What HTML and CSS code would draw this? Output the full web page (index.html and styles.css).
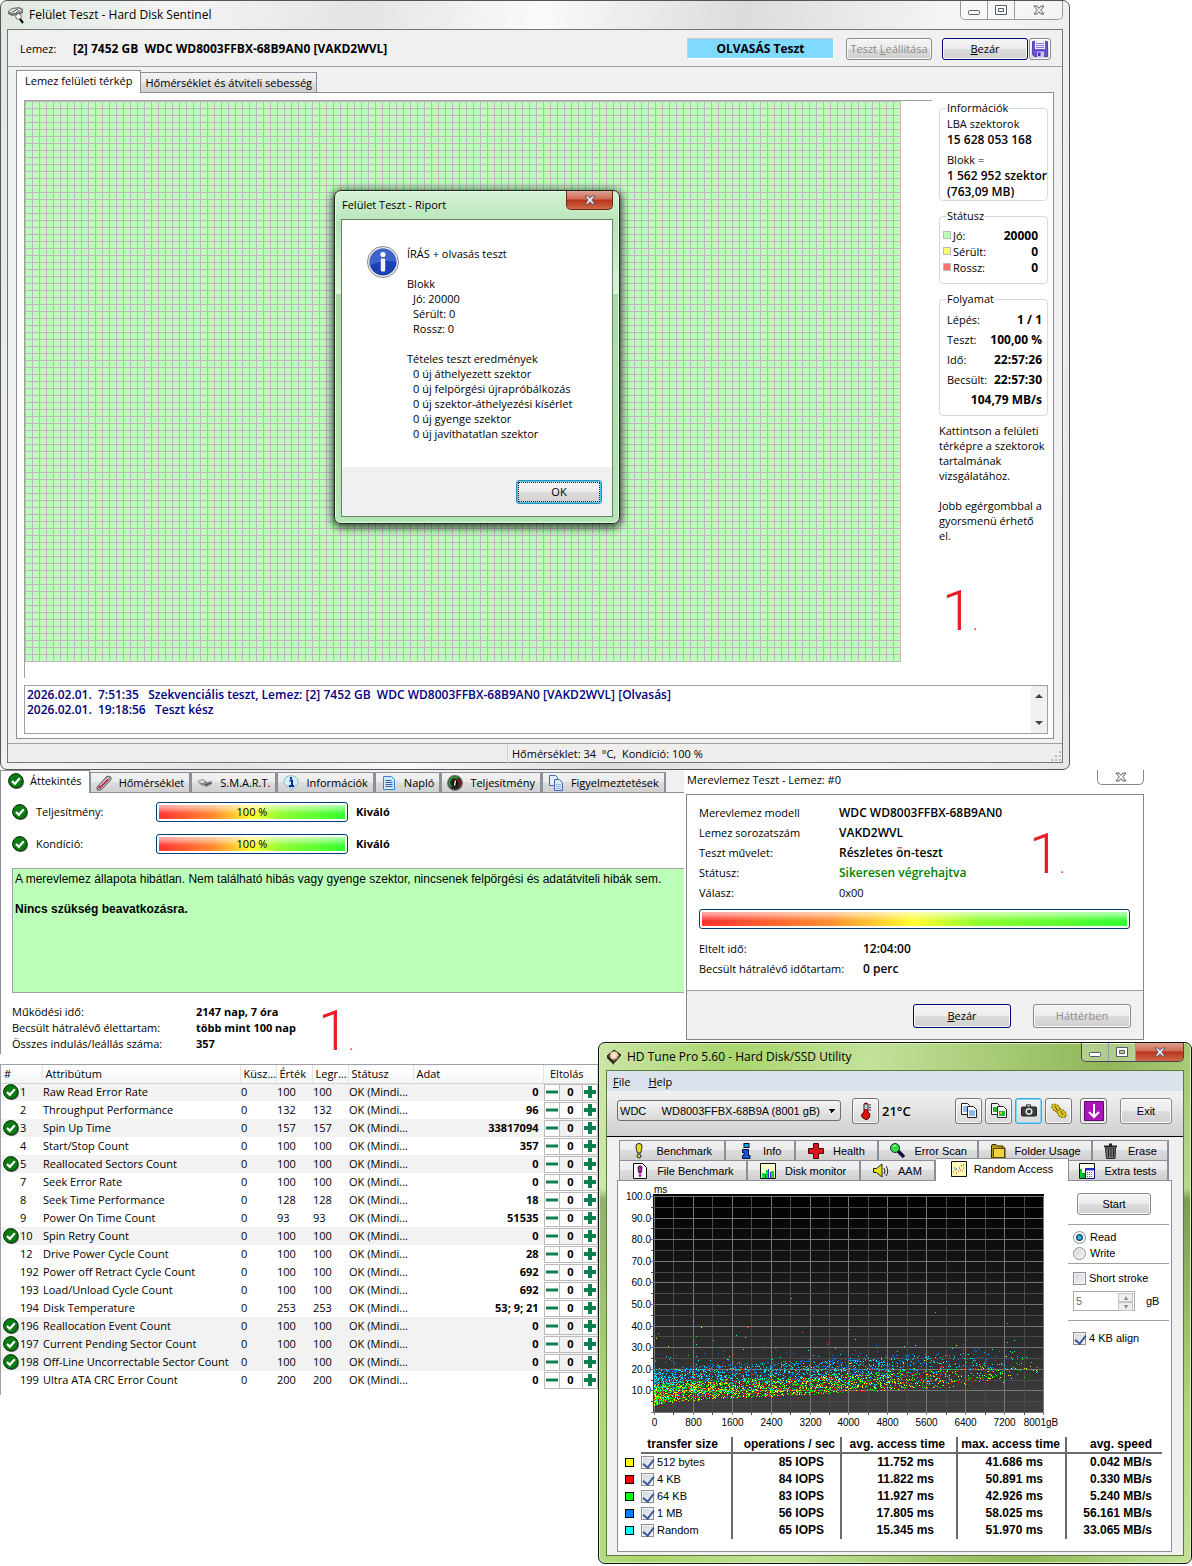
FILE: index.html
```html
<!DOCTYPE html>
<html lang="hu">
<head>
	<title>Felület Teszt - Hard Disk Sentinel</title>
	<meta charset="UTF-8">
	<meta name="viewport" content="width=device-width, initial-scale=1.0">
	<link rel="stylesheet" href="styles.css">
</head>
<body>
	<!-- shared icons -->
	<svg class="defs" width="0" height="0">
		<symbol id="ok" viewBox="0 0 16 16">
			<circle cx="9" cy="9" r="7" fill="#777"/>
			<circle cx="7.8" cy="7.8" r="7.2" fill="#0a7d12" stroke="#002b00"/>
			<path d="M4 8l2.800 2.800L11.800 5.200" fill="none" stroke="#fff" stroke-width="2.200"/>
		</symbol>
		<symbol id="cross" viewBox="0 0 12 10">
			<path d="M1 1h3l2 2.400L8 1h3L7.700 5 11 9H8L6 6.600 4 9H1l3.300-4z" fill="#fff" stroke="#555a6a"/>
		</symbol>
		<symbol id="min" viewBox="0 0 12 10">
			<rect x=".5" y="5.500" width="11" height="4" rx="1" fill="#fff" stroke="#555a6a"/>
		</symbol>
		<symbol id="max" viewBox="0 0 12 10">
			<path d="M.5.5h11v9H.5zM3.500 3.500v3h5v-3z" fill="#fff" fill-rule="evenodd" stroke="#555a6a"/>
		</symbol>
	</svg>

	<main class="desktop">
		<section class="window surface">
			<header class="titlebar">
				<svg width="18" height="18" viewBox="0 0 18 18">
					<path d="M1 5l4-3 7-1 4 2v4l-4 2-7 1-4-2z" fill="#777"/>
					<path d="M2 5l4-2 6-.5 3 2-4 2-6 .5z" fill="#ececec"/>
					<path d="M5 6l6-3M9 7l4-3" stroke="#555"/>
					<circle cx="11.500" cy="10.500" r="2.800" fill="#fff" stroke="#666"/>
					<path d="M13 13l3 4" stroke="#111" stroke-width="2.200"/>
				</svg>
				<h1>Felület Teszt - Hard Disk Sentinel</h1>
				<div class="caption">
					<button aria-label="Minimize"><svg width="12" height="10"><use href="#min"/></svg></button>
					<button aria-label="Maximize"><svg width="12" height="10"><use href="#max"/></svg></button>
					<button class="wide" aria-label="Close"><svg width="12" height="10"><use href="#cross"/></svg></button>
				</div>
			</header>
			<div class="client">
				<div class="diskbar">
					<span class="disk-label">Lemez:</span>
					<b class="disk-name">[2] 7452 GB&nbsp; WDC WD8003FFBX-68B9AN0 [VAKD2WVL]</b>
					<b class="mode">OLVASÁS Teszt</b>
					<button class="btn stop" disabled>Teszt <u>L</u>eállítása</button>
					<button class="btn default close"><u>B</u>ezár</button>
					<button class="btn save" aria-label="Mentés">
						<svg width="16" height="16" viewBox="0 0 16 16">
							<path d="M.5.5h15v15h-13l-2-2z" fill="#6a4fd0" stroke="#5a40b8"/>
							<path d="M3 0h10v8H3z" fill="#f0eeff"/>
							<path d="M4 2.500h8M4 4.500h8M4 6.500h8" stroke="#8a78e0"/>
							<path d="M5 10.500h7V16H5z" fill="#c9c3ee"/>
							<path d="M6 11.500h2.500V15H6z" fill="#4a30a8"/>
						</svg>
					</button>
				</div>
				<nav class="tabs">
					<button class="tab active">Lemez felületi térkép</button>
					<button class="tab">Hőmérséklet és átviteli sebesség</button>
				</nav>
				<div class="panel">
					<div class="map-row">
						<div class="map">
							<div class="blocks"></div>
							<div class="report" role="dialog" aria-label="Riport">
								<header class="report-title">
									<span>Felület Teszt - Riport</span>
									<button aria-label="Close"><svg width="12" height="10"><use href="#cross"/></svg></button>
								</header>
								<div class="report-box">
									<div class="report-body">
										<svg width="32" height="32" viewBox="0 0 32 32">
											<circle cx="16" cy="16" r="15.500" fill="#eee" stroke="#888"/>
											<circle cx="16" cy="16" r="13.500" fill="#1c3fb4"/>
											<path d="M2.500 16a13.500 13.500 0 0 1 27 0q-14-3-27 4z" fill="#5579d6" opacity=".6"/>
											<circle cx="16" cy="8.500" r="2.600" fill="#fff"/>
											<rect x="13.800" y="12.500" width="4.400" height="13" rx="1" fill="#f3f3f3"/>
										</svg>
										<div class="report-text">
											<p>ÍRÁS + olvasás teszt</p>
											<p>Blokk</p>
											<ul>
												<li>Jó: 20000</li>
												<li>Sérült: 0</li>
												<li>Rossz: 0</li>
											</ul>
											<p>Tételes teszt eredmények</p>
											<ul>
												<li>0 új áthelyezett szektor</li>
												<li>0 új felpörgési újrapróbálkozás</li>
												<li>0 új szektor-áthelyezési kísérlet</li>
												<li>0 új gyenge szektor</li>
												<li>0 új javíthatatlan szektor</li>
											</ul>
										</div>
									</div>
									<footer class="report-foot"><button class="btn ok">OK</button></footer>
								</div>
							</div>
						</div>
						<aside class="side">
							<fieldset class="info">
								<legend>Információk</legend>
								<div>LBA szektorok</div>
								<b>15 628 053 168</b>
								<div class="block-size">Blokk =</div>
								<b>1 562 952 szektor</b>
								<b>(763,09 MB)</b>
							</fieldset>
							<fieldset class="status">
								<legend>Státusz</legend>
								<dl>
									<dt class="good">Jó:</dt><dd>20000</dd>
									<dt class="weak">Sérült:</dt><dd>0</dd>
									<dt class="bad">Rossz:</dt><dd>0</dd>
								</dl>
							</fieldset>
							<fieldset class="progress">
								<legend>Folyamat</legend>
								<dl>
									<dt>Lépés:</dt><dd>1 / 1</dd>
									<dt>Teszt:</dt><dd>100,00 %</dd>
									<dt>Idő:</dt><dd>22:57:26</dd>
									<dt>Becsült:</dt><dd>22:57:30</dd>
									<dd class="speed">104,79 MB/s</dd>
								</dl>
							</fieldset>
							<p class="hint">Kattintson a felületi<br>térképre a szektorok<br>tartalmának<br>vizsgálatához.</p>
							<p class="hint">Jobb egérgombbal a<br>gyorsmenü érhető<br>el.</p>
							<div class="mark">1<small>.</small></div>
						</aside>
					</div>
					<div class="log">
						<div class="log-text">
							<div>2026.02.01.&nbsp; 7:51:35&nbsp;&nbsp; Szekvenciális teszt, Lemez: [2] 7452 GB&nbsp; WDC WD8003FFBX-68B9AN0 [VAKD2WVL] [Olvasás]</div>
							<div>2026.02.01.&nbsp; 19:18:56&nbsp;&nbsp; Teszt kész</div>
						</div>
						<div class="scroll">
							<svg width="8" height="4"><path d="M0 4l4-4 4 4z" fill="#444"/></svg>
							<svg width="8" height="4"><path d="M0 0l4 4 4-4z" fill="#444"/></svg>
						</div>
					</div>
				</div>
				<footer class="statusbar">
					<span></span>
					<span class="temp">Hőmérséklet: 34&nbsp; °C,&nbsp; Kondíció: 100 %</span>
					<svg class="grip" width="10" height="10" viewBox="0 0 10 10"><path d="M8 0h2v2H8zM4 4h2v2H4zM8 4h2v2H8zM0 8h2v2H0zM4 8h2v2H4zM8 8h2v2H8z" fill="#bbb"/></svg>
				</footer>
			</div>
		</section>

		<section class="overview">
			<nav class="tabs">
				<button class="tab active"><svg width="16" height="16"><use href="#ok"/></svg>Áttekintés</button>
				<button class="tab">
					<svg width="16" height="16" viewBox="0 0 16 16"><path d="M1 12L11 1l4 1 0 3L5 15l-4 0z" fill="#aaa" stroke="#555" stroke-width=".8"/><path d="M3 13l9-9" stroke="#c2184b" stroke-width="2.400"/><path d="M4 11l8-8" stroke="#fff" stroke-width=".8"/></svg>Hőmérséklet</button>
				<button class="tab"><svg width="16" height="16" viewBox="0 0 16 16"><path d="M0 6l6-2 4 3 5-1v3l-5 3-6-2z" fill="#8c8c8c"/><path d="M1 6.500l5-1.500 2 2-3 1z" fill="#e6e6e6"/><path d="M8 10l6-2" stroke="#444"/></svg>S.M.A.R.T.</button>
				<button class="tab"><svg width="16" height="16" viewBox="0 0 16 16"><path d="M8 .7c4 0 7 2.500 7 5.800s-2.700 5-5 5.600L8.600 15.500 7 12C4 11.500 1 10 1 6.500S4 .7 8 .7z" fill="#d5eefb" stroke="#8bb"/><path d="M8 2v2M6.500 5.500H9v5M6 11h5" stroke="#0b2c9a" stroke-width="2" fill="none"/></svg>Információk</button>
				<button class="tab"><svg width="16" height="16" viewBox="0 0 16 16"><path d="M2.500 1.500h8l3 3v10h-11z" fill="#d4e9ff" stroke="#3b80d0"/><path d="M4.500 5.500h6M4.500 7.500h7M4.500 9.500h7M4.500 11.500h7" stroke="#2b5fa8"/></svg>Napló</button>
				<button class="tab"><svg width="16" height="16" viewBox="0 0 16 16"><circle cx="8" cy="8" r="7.200" fill="#222" stroke="#666" stroke-width="1.500"/><path d="M4.500 11.500a5 5 0 0 1 6-8" fill="none" stroke="#1fa32a" stroke-width="1.800"/><path d="M10 4a5 5 0 0 1 2 7" fill="none" stroke="#b31515" stroke-width="1.600"/><circle cx="8" cy="8" r="2.500" fill="#000"/><path d="M7.500 10.500l1-5" stroke="#fff" stroke-width="1.300"/></svg>Teljesítmény</button>
				<button class="tab"><svg width="16" height="16" viewBox="0 0 16 16"><path d="M1.500.5h6l2 2v8h-8z" fill="#e4eefc" stroke="#4a66a8"/><path d="M6.500 4.500h5l3 3v8h-8z" fill="#d5e6ff" stroke="#4a66a8"/><path d="M8 9.500h5M8 11.500h5M8 13.500h5" stroke="#8fb0e8"/></svg>Figyelmeztetések</button>
			</nav>
			<div class="overview-body">
				<div class="health-row">
					<svg width="16" height="16"><use href="#ok"/></svg>
					<span>Teljesítmény:</span>
					<div class="meter"><i>100 %</i></div>
					<b>Kiváló</b>
				</div>
				<div class="health-row">
					<svg width="16" height="16"><use href="#ok"/></svg>
					<span>Kondíció:</span>
					<div class="meter"><i>100 %</i></div>
					<b>Kiváló</b>
				</div>
				<div class="verdict">
					<p>A merevlemez állapota hibátlan. Nem található hibás vagy gyenge szektor, nincsenek felpörgési és adatátviteli hibák sem.</p>
					<p><b>Nincs szükség beavatkozásra.</b></p>
				</div>
				<div class="lifetime">
					<dl>
						<dt>Működési idő:</dt><dd>2147 nap, 7 óra</dd>
						<dt>Becsült hátralévő élettartam:</dt><dd>több mint 100 nap</dd>
						<dt>Összes indulás/leállás száma:</dt><dd>357</dd>
					</dl>
					<div class="mark">1<small>.</small></div>
				</div>
			</div>
		</section>

		<section class="selftest">
			<header>
				<span>Merevlemez Teszt - Lemez: #0</span>
				<button class="plain-close" aria-label="Close"><svg width="12" height="10"><use href="#cross"/></svg></button>
			</header>
			<div class="selftest-box">
				<div class="selftest-body">
					<div class="selftest-top">
						<dl>
							<dt>Merevlemez modell</dt><dd>WDC WD8003FFBX-68B9AN0</dd>
							<dt>Lemez sorozatszám</dt><dd>VAKD2WVL</dd>
							<dt>Teszt művelet:</dt><dd>Részletes ön-teszt</dd>
							<dt>Státusz:</dt><dd class="success">Sikeresen végrehajtva</dd>
							<dt>Válasz:</dt><dd class="code">0x00</dd>
						</dl>
						<div class="mark">1<small>.</small></div>
					</div>
					<div class="meter"></div>
					<dl class="times">
						<dt>Eltelt idő:</dt><dd>12:04:00</dd>
						<dt>Becsült hátralévő időtartam:</dt><dd>0 perc</dd>
					</dl>
				</div>
				<footer>
					<button class="btn default"><u>B</u>ezár</button>
					<button class="btn" disabled>Háttérben</button>
				</footer>
			</div>
		</section>

		<div class="smart-list">
			<table class="smart">
				<colgroup>
					<col class="c-id"><col class="c-name"><col class="c-num"><col class="c-num"><col class="c-num"><col class="c-stat"><col><col class="c-off">
				</colgroup>
				<thead>
					<tr><th>#</th><th>Attribútum</th><th>Küsz...</th><th>Érték</th><th>Legr...</th><th>Státusz</th><th>Adat</th><th>Eltolás</th></tr>
				</thead>
				<tbody id="smart-rows"></tbody>
			</table>
		</div>

		<section class="hdtune">
			<header class="hd-title">
				<svg width="16" height="16" viewBox="0 0 16 16"><path d="M1 7l7-6 7 5-7 8z" fill="#54473a" stroke="#2a2018"/><path d="M1 7l7 7v2L1 9z" fill="#2b2118"/><circle cx="8" cy="6.500" r="4" fill="#f1d7a6"/><circle cx="8" cy="6.500" r="1.500" fill="#fffbe8"/><path d="M9 10l4-4" stroke="#c88"/></svg>
				<span>HD Tune Pro 5.60 - Hard Disk/SSD Utility</span>
				<div class="caption">
					<button aria-label="Minimize"><svg width="12" height="10"><use href="#min"/></svg></button>
					<button aria-label="Maximize"><svg width="12" height="10"><use href="#max"/></svg></button>
					<button class="wide red" aria-label="Close"><svg width="12" height="10"><use href="#cross"/></svg></button>
				</div>
			</header>
			<div class="hd-client">
				<nav class="menu"><a href="#"><u>F</u>ile</a><a href="#"><u>H</u>elp</a></nav>
				<div class="toolbar">
					<select aria-label="Drive"><option>WDC &nbsp;&nbsp;&nbsp; WD8003FFBX-68B9A (8001 gB)</option></select>
					<button class="tool" aria-label="Temperature"><svg width="16" height="18" viewBox="0 0 16 18"><path d="M6 2q2-2 4 0v8q3 2 1.500 5T8 17.500 4 15t2-5z" fill="#d11" stroke="#500"/><path d="M6.500 2.500h3V7h-3z" fill="#7fe4ec"/><path d="M11 3h2M11 5.500h2M11 8h2" stroke="#333"/></svg></button>
					<b class="degrees">21°C</b>
					<button class="tool" aria-label="Copy text"><svg width="16" height="16" viewBox="0 0 16 16"><path d="M.5.5h6l2 2v9h-8z" fill="#fff" stroke="#222"/><path d="M2 4h4M2 6h4M2 8h4" stroke="#27d"/><path d="M6.500 3.500h6l3 3v8h-9z" fill="#fff" stroke="#222"/><path d="M8 8h6M8 10h6M8 12h6" stroke="#27d"/></svg></button>
					<button class="tool" aria-label="Copy picture"><svg width="16" height="16" viewBox="0 0 16 16"><path d="M.5.5h6l2 2v9h-8z" fill="#fff" stroke="#222"/><path d="M2 4h4v5H2z" fill="#2b3"/><path d="M6.500 3.500h6l3 3v8h-9z" fill="#fff" stroke="#222"/><path d="M8 8h6v5H8z" fill="#2b3"/><path d="M9 9h2v2H9z" fill="#e8c020"/></svg></button>
					<button class="tool hot" aria-label="Screenshot"><svg width="16" height="16" viewBox="0 0 16 16"><path d="M5.500 4V1.800h4V4" fill="none" stroke="#333"/><rect x=".5" y="4" width="15" height="9" rx="1" fill="#3a3f42" stroke="#222"/><circle cx="8" cy="8.500" r="3.500" fill="#e5eeee"/><circle cx="8" cy="8.500" r="2" fill="#333"/></svg></button>
					<button class="tool" aria-label="Options"><svg width="16" height="16" viewBox="0 0 16 16"><ellipse cx="5" cy="5" rx="5" ry="3.200" transform="rotate(40 5 5)" fill="#d8c21c" stroke="#776608" stroke-dasharray="2 1"/><ellipse cx="11" cy="10.500" rx="5" ry="3.600" transform="rotate(40 11 10)" fill="#d8c21c" stroke="#776608" stroke-dasharray="2 1"/><path d="M4 3l2 4M10 8l2 4" stroke="#665500"/></svg></button>
					<button class="tool down" aria-label="Save"><svg width="20" height="20" viewBox="0 0 20 20"><path d="M.5.5h19v19H.5z" fill="#a815b8" stroke="#5d0c68"/><path d="M10 3v13M5 11l5 5 5-5" fill="none" stroke="#fff" stroke-width="2"/></svg></button>
					<button class="btn exit">Exit</button>
				</div>
				<nav class="hd-tabs">
					<button class="hd-tab w106"><svg width="16" height="16" viewBox="0 0 16 16"><path d="M5 3q0-2.500 3-2.500T11 3q0 3-1.500 7h-3Q5 6 5 3z" fill="#e6e01a" stroke="#222"/><circle cx="8" cy="13" r="2" fill="#e6e01a" stroke="#222"/></svg>Benchmark</button>
					<button class="hd-tab w70"><svg width="16" height="16" viewBox="0 0 16 16"><rect x="6" y=".5" width="5" height="4" fill="#1ad" stroke="#013"/><path d="M4.500 6.500h6v6h1.500v3H4.500v-3H6v-3H4.500z" fill="#15d" stroke="#013"/></svg>Info</button>
					<button class="hd-tab w83"><svg width="16" height="16" viewBox="0 0 16 16"><path d="M5.500.5h5v5h5v5h-5v5h-5v-5h-5v-5h5z" fill="#d81818" stroke="#500"/></svg>Health</button>
					<button class="hd-tab w101"><svg width="16" height="16" viewBox="0 0 16 16"><path d="M9 8l6 6" stroke="#114" stroke-width="3.500"/><circle cx="6" cy="5" r="4.500" fill="#3d4" stroke="#132"/><path d="M4 4q1-2 3-1.500" stroke="#fff" fill="none"/></svg>Error Scan</button>
					<button class="hd-tab w114"><svg width="16" height="16" viewBox="0 0 16 16"><path d="M1.500 15V3q0-1.500 1.500-1.500h3L7.500 3H13v2h2v10z" fill="#b99a12" stroke="#332a00"/><path d="M3.500 5.500h11v9h-11z" fill="#f0d33a" stroke="#5a4a00"/></svg>Folder Usage</button>
					<button class="hd-tab w76"><svg width="16" height="16" viewBox="0 0 16 16"><path d="M1 3.500h13M6 1.500h3" stroke="#222" stroke-width="2"/><path d="M2.500 5h10L12 15.500H3.500z" fill="#777" stroke="#222"/><path d="M5.500 6v8M8 6v8M10.500 6v8" stroke="#222"/></svg>Erase</button>
				</nav>
				<nav class="hd-tabs">
					<button class="hd-tab w128"><svg width="16" height="16" viewBox="0 0 16 16"><path d="M1.500.5h9l4 4v11h-13z" fill="#fff" stroke="#111"/><path d="M6 4q2-2.500 4 0 0 3-1 6H7Q6 7 6 4z" fill="#c412c4" stroke="#222"/><circle cx="8" cy="12.500" r="1.500" fill="#c412c4"/></svg>File Benchmark</button>
					<button class="hd-tab w113"><svg width="16" height="16" viewBox="0 0 16 16"><path d="M.5.5h15v15H.5z" fill="#ffffd0" stroke="#111"/><path d="M2 15v-5h3v5zM6 15V7h2v8zM11 15V8h3v7z" fill="#0d2"/><path d="M5 15v-4h1v4zM8 15V6h1v9zM10 15V9h1v6z" fill="#33d"/></svg>Disk monitor</button>
					<button class="hd-tab w75"><svg width="16" height="16" viewBox="0 0 16 16"><path d="M.5 5.500h3L9 1v13l-5.500-4.500h-3z" fill="#e6e01a" stroke="#222"/><path d="M11 5q2 3 0 6M13 3q3.500 5 0 10" fill="none" stroke="#222"/></svg>AAM</button>
					<button class="hd-tab active w134"><svg width="16" height="16" viewBox="0 0 16 16"><path d="M.5.5h15v15H.5z" fill="#ffffb8" stroke="#111"/><path d="M2 11h1M5 12h1M7 10h1M9 9h1M11 10h1M4 9h1" stroke="#d22"/><path d="M3 7h1M5 8h1M8 7h1M10 5h1M12 4h1M12 7h1" stroke="#22d"/></svg>Random Access</button>
					<button class="hd-tab w100"><svg width="16" height="16" viewBox="0 0 16 16"><path d="M.5.500h15v15H.5z" fill="#ffffe8" stroke="#111"/><path d="M1 15V6h2v9z" fill="#0c2"/><path d="M3 15v-5h3v5z" fill="#0a3"/><path d="M6.500 5.500h9v10h-9z" fill="#fff" stroke="#118"/><path d="M7 6.500h8" stroke="#33d" stroke-width="2"/><path d="M8 9.500h6M8 11.500h6M8 13.500h6" stroke="#d22" stroke-dasharray="1 1"/></svg>Extra tests</button>
				</nav>
				<div class="hd-panel">
					<div class="chart-row">
						<svg id="chart" width="446" height="250" viewBox="0 0 446 250"></svg>
						<form class="options">
							<button type="button" class="btn start">Start</button>
							<div class="group">
								<label><input type="radio" name="op" checked>Read</label>
								<label><input type="radio" name="op">Write</label>
							</div>
							<div class="group stroke">
								<label><input type="checkbox">Short stroke</label>
								<div class="spin">
									<input type="text" id="stroke-size" value="5" disabled>
									<span class="arrows"><i>▴</i><i>▾</i></span>
									<label for="stroke-size">gB</label>
								</div>
							</div>
							<div class="group align">
								<label><input type="checkbox" checked>4 KB align</label>
							</div>
						</form>
					</div>
					<table class="results">
						<colgroup>
							<col class="r-key"><col class="r-size"><col class="r-ops"><col class="r-avg"><col class="r-max"><col class="r-speed">
						</colgroup>
						<thead>
							<tr><td class="key"></td><th class="size">transfer size</th><th>operations / sec</th><th class="avg">avg. access time</th><th>max. access time</th><th>avg. speed</th></tr>
						</thead>
						<tbody>
							<tr><td class="key"><i class="yellow"></i></td><td class="size"><label><input type="checkbox" checked>512 bytes</label></td><td>85 IOPS</td><td class="time">11.752 ms</td><td class="time">41.686 ms</td><td>0.042 MB/s</td></tr>
							<tr><td class="key"><i class="red"></i></td><td class="size"><label><input type="checkbox" checked>4 KB</label></td><td>84 IOPS</td><td class="time">11.822 ms</td><td class="time">50.891 ms</td><td>0.330 MB/s</td></tr>
							<tr><td class="key"><i class="green"></i></td><td class="size"><label><input type="checkbox" checked>64 KB</label></td><td>83 IOPS</td><td class="time">11.927 ms</td><td class="time">42.926 ms</td><td>5.240 MB/s</td></tr>
							<tr><td class="key"><i class="blue"></i></td><td class="size"><label><input type="checkbox" checked>1 MB</label></td><td>56 IOPS</td><td class="time">17.805 ms</td><td class="time">58.025 ms</td><td>56.161 MB/s</td></tr>
							<tr><td class="key"><i class="cyan"></i></td><td class="size"><label><input type="checkbox" checked>Random</label></td><td>65 IOPS</td><td class="time">15.345 ms</td><td class="time">51.970 ms</td><td>33.065 MB/s</td></tr>
						</tbody>
					</table>
				</div>
			</div>
		</section>
	</main>
	<script src="script.js"></script>
</body>
</html>
```

FILE: styles.css
```css
* {
	box-sizing: border-box;
}

body {
	margin: 0;
	background: #fff;
	color: #000;
	font: 11px/16px "Open Sans", "Noto Sans", sans-serif;
}

h1, p, dl, dd, ul {
	margin: 0;
	padding: 0;
	font-size: 11px;
	font-weight: normal;
}

ul {
	list-style: none;
}

b, dd {
	font-weight: 700;
}

button {
	font: inherit;
	color: #000;
	margin: 0;
	padding: 0;
	white-space: nowrap;
}

svg {
	display: block;
	flex: none;
}

.defs {
	position: absolute;
}

/* the four columns are the edges that the windows share */
.desktop {
	display: grid;
	grid-template-columns: 598fr 86fr 386fr 122fr;
	align-items: start;
}

/* common parts */
.btn {
	height: 22px;
	border: 1px solid #8a8a8a;
	border-radius: 3px;
	background: linear-gradient(#f4f4f4, #ececec 48%, #dcdcdc 50%, #d0d0d0);
	box-shadow: inset 0 0 0 1px #fafafa;
}

.btn:disabled {
	color: #8c8c8c;
}

.btn.default {
	border-color: #000080;
}

.caption {
	display: flex;
	margin-left: auto;
	align-self: flex-start;
	border: 1px solid #999;
	border-top: 0;
	border-radius: 0 0 5px 5px;
	overflow: hidden;
}

.caption button {
	display: flex;
	align-items: center;
	justify-content: center;
	width: 27px;
	height: 18px;
	border: 0;
	border-right: 1px solid #999;
	background: rgba(255, 255, 255, 0.3);
}

.caption .wide {
	width: 47px;
	border-right: 0;
}

.caption .red,
.report-title button {
	background: linear-gradient(#e0a090, #cf6a54 45%, #b8321c 50%, #cf6a48);
}

.tabs {
	display: flex;
	align-items: flex-end;
}

.tab {
	display: flex;
	align-items: center;
	height: 20px;
	padding: 0 4px;
	border: 1px solid #8c8e9a;
	border-bottom: 0;
	background: linear-gradient(#f2f2f2, #ebebeb 48%, #dddddd 50%, #d0d0d0);
	margin-left: -1px;
}

.tab.active {
	position: relative;
	background: #fff;
	height: 23px;
	margin: 0 0 -1px;
	padding: 0 8px 2px;
}

.mark {
	color: #ed1c24;
	font: 300 56px/54px Roboto, "Liberation Sans", sans-serif;
}

.mark small {
	font-size: 20px;
}

.meter {
	height: 20px;
	padding: 2px;
	border: 1px solid #003c74;
	border-radius: 3px;
	background: linear-gradient(rgba(255, 255, 255, 0.65), rgba(255, 255, 255, 0.5) 25%, rgba(255, 255, 255, 0) 60%, rgba(255, 255, 255, 0) 85%, rgba(255, 255, 255, 0.3)), linear-gradient(90deg, #ff3030, #ff8c30 30%, #ffff30 50%, #90ff30 65%, #30ff30);
	background-clip: content-box;
	text-align: center;
	line-height: 14px;
}

.meter i {
	font-style: normal;
}

/* surface test window */
.surface {
	grid-column: 1 / 4;
	border: 1px solid #555;
	border-radius: 7px;
	padding: 0 6px 6px;
	background: linear-gradient(100deg, #dfe9e0, #f4f4f4 15%, #e4e4e4 30%, #fafafa 45%, #dcdcdc 62%, #f6f6f6 80%, #e6e6e6);
}

.titlebar {
	display: flex;
	align-items: center;
	height: 28px;
	gap: 4px;
}

.titlebar h1 {
	font-size: 12px;
}

.client {
	border: 1px solid #757575;
	background: #f0f0f0;
}

.diskbar {
	display: flex;
	align-items: center;
	height: 37px;
	padding: 1px 11px 0 12px;
	border-bottom: 1px solid #a0a0a0;
}

.disk-label {
	width: 53px;
}

.disk-name {
	margin-right: auto;
	font-size: 12px;
}

.mode {
	width: 147px;
	height: 21px;
	line-height: 19px;
	border: 1px solid #ccc;
	border-right-color: #fff;
	border-bottom-color: #fff;
	background: #80d9ff;
	font-size: 12px;
	text-align: center;
}

.stop {
	width: 86px;
	margin: 0 10px 0 12px;
}

.close {
	width: 86px;
	margin-right: 1px;
}

.save {
	width: 22px;
	padding: 2px;
}

.surface .tabs {
	margin: 3px 8px 0;
	height: 22px;
}

.panel {
	margin: 0 8px;
	padding: 7px 5px 4px 7px;
	border: 1px solid #8c8e9a;
	background: #fff;
}

.map-row {
	display: flex;
	gap: 7px;
}

.map {
	position: relative;
	flex: 1;
	height: 578px;
	border: 1px solid #a0a0a0;
	border-width: 1px 0 0 1px;
}

.blocks {
	width: 876px;
	height: 561px;
	background:
		linear-gradient(90deg, #c3b5c4 1px, transparent 1px) 0 0 / 7px 7px,
		linear-gradient(#c3b5c4 1px, transparent 1px) 0 0 / 7px 7px,
		#bbffb9;
}

.side {
	width: 109px;
}

fieldset {
	margin: 0 0 7px;
	padding: 0 5px 0 7px;
	min-width: 0;
	border: 1px solid #d0dce4;
	border-radius: 4px;
}

legend {
	padding: 0;
}

.info > div, .info > b {
	display: block;
	white-space: nowrap;
	margin-right: -4px;
}

.info > b,
.side dd {
	font-size: 12px;
}

.info > b {
	font-weight: 600;
}

.info .block-size {
	margin-top: 4px;
}

fieldset dl {
	display: grid;
	grid-template-columns: auto 1fr;
}

fieldset dd {
	text-align: right;
	white-space: nowrap;
}

.speed {
	grid-column: 1 / 3;
}

.status {
	padding: 4px 9px 7px 3px;
}

.status legend {
	margin-left: 4px;
}

.status dt::before {
	content: "";
	display: inline-block;
	width: 6px;
	height: 6px;
	margin: 0 2px 1px 0;
	border: 1px solid #bbb;
	background: #bbffb9;
}

.status .weak::before {
	background: #ffff70;
}

.status .bad::before {
	background: #ff7070;
}

.progress {
	padding: 3px 5px 5px 7px;
	line-height: 20px;
}

.progress legend {
	line-height: 16px;
}

.hint {
	line-height: 15px;
	margin-bottom: 15px;
	white-space: nowrap;
}

.side .mark {
	margin: 41px 0 0 3px;
}

.log {
	display: flex;
	height: 49px;
	margin-top: 7px;
	border: 1px solid #a0a0a0;
}

.log-text {
	flex: 1;
	padding: 1px 2px;
	color: #000080;
	font-size: 12px;
	font-weight: 600;
	line-height: 15px;
}

.scroll {
	display: flex;
	flex-direction: column;
	justify-content: space-between;
	align-items: center;
	width: 16px;
	padding: 8px 0;
	background: #f0f0f0;
}

.statusbar {
	display: grid;
	grid-template-columns: 499fr 555fr;
	height: 19px;
	line-height: 20px;
	margin-top: 4px;
	border-top: 1px solid #a0a0a0;
	background: #f0eded;
	position: relative;
}

.temp {
	border-left: 1px solid #d0d0d0;
	padding-left: 4px;
}

.grip {
	position: absolute;
	right: 1px;
	bottom: 1px;
}

/* report message box over the map */
.report {
	position: absolute;
	left: 309px;
	top: 89px;
	width: 286px;
	padding: 0 6px 6px;
	border: 1px solid #1c2a1c;
	border-radius: 7px;
	background: linear-gradient(#d5f2d5, #b8e4b8 10%, #d9f4d9 31%, #a9dca9 31%, #b5e6b5);
	box-shadow: 0 2px 9px 2px rgba(0, 0, 0, 0.7), inset 0 0 0 1px #e6fbe6;
}

.report-title {
	display: flex;
	justify-content: space-between;
	height: 28px;
	padding-left: 1px;
	line-height: 27px;
}

.report-title button {
	display: flex;
	align-items: center;
	justify-content: center;
	width: 47px;
	height: 19px;
	border: 1px solid #6b2a20;
	border-top: 0;
	border-radius: 0 0 5px 5px;
}

.report-box {
	border: 1px solid #6b7d6b;
	background: #fff;
}

.report-body {
	display: flex;
	gap: 8px;
	padding: 26px 0 26px 25px;
	line-height: 15px;
}

.report-text p {
	margin-bottom: 15px;
}

.report-text p + p {
	margin-bottom: 0;
}

.report-text ul {
	padding-left: 6px;
	margin-bottom: 15px;
	white-space: nowrap;
}

.report-text ul + p {
	margin-bottom: 0;
}

.report-text ul:last-child {
	margin-bottom: 0;
}

.report-foot {
	display: flex;
	justify-content: flex-end;
	height: 49px;
	padding: 13px 10px 0;
	background: #f0f0f0;
}

.ok {
	width: 86px;
	height: 24px;
	border-color: #2c8fb8;
	box-shadow: inset 0 0 0 1px #48c8f0;
	outline: 1px dotted #222;
	outline-offset: -3px;
}

/* overview */
.overview {
	grid-column: 1 / 3;
	margin-bottom: 10px;
	background: #f0f0f0;
}

.overview .tabs {
	height: 22px;
}

.overview .tab {
	gap: 7px;
	padding: 0 5px;
	margin-left: 0;
	border-right-width: 2px;
}

.overview .tab.active {
	gap: 6px;
	padding: 0 7px 2px;
	border-right-width: 1px;
}

.overview-body {
	padding: 9px 0 2px 11px;
	border: 1px solid #8c8e9a;
	border-width: 1px 0 0 1px;
	background: #fff;
}

.health-row {
	display: grid;
	grid-template-columns: 16px 112px 192px auto;
	column-gap: 8px;
	align-items: center;
	height: 20px;
	margin-bottom: 12px;
}

.verdict {
	height: 125px;
	margin-top: 14px;
	padding: 3px 2px;
	border: 1px solid #a0a0a8;
	border-right: 0;
	background: #bbffb9;
	font: 12px/15px "Liberation Sans", Arial, sans-serif;
	white-space: nowrap;
}

.verdict p {
	font-size: 12px;
	margin-bottom: 15px;
}

.lifetime {
	display: flex;
	margin-top: 11px;
	height: 48px;
}

.lifetime dl {
	display: grid;
	grid-template-columns: 184px 122px;
}

/* self test dialog */
.selftest {
	grid-column: 3 / 5;
	margin-right: 48px;
	padding-left: 2px;
}

.selftest header {
	display: flex;
	justify-content: space-between;
	height: 24px;
	padding-left: 1px;
	line-height: 20px;
}

.plain-close {
	display: flex;
	align-items: center;
	justify-content: center;
	width: 47px;
	height: 15px;
	border: 1px solid #888;
	border-top: 0;
	border-radius: 0 0 5px 5px;
	background: #fff;
}

.selftest-box {
	border: 1px solid #858585;
}

.selftest-body {
	padding: 8px 13px 11px 12px;
	line-height: 20px;
}

.selftest-top {
	display: flex;
}

.selftest dl {
	display: grid;
	grid-template-columns: 140px 190px;
}

.selftest dd {
	font-size: 12px;
	font-weight: 600;
}

.selftest .success {
	color: #008000;
}

.selftest .code {
	font-size: 11px;
	font-weight: normal;
}

.selftest .mark {
	margin-top: 24px;
	height: 54px;
}

.selftest .meter {
	margin: 6px 0 10px;
}

.selftest .times {
	grid-template-columns: 164px 1fr;
}

.selftest footer {
	display: flex;
	justify-content: flex-end;
	gap: 22px;
	height: 49px;
	padding: 13px 12px 0;
	border-top: 1px solid #a0a0a0;
	background: #f0f0f0;
}

.selftest footer .btn {
	width: 98px;
	height: 24px;
}

/* S.M.A.R.T. table */
.smart-list {
	padding-bottom: 6px;
	border-left: 1px solid #a0a0a8;
	border-top: 1px solid #a0a0a8;
}

.smart {
	table-layout: fixed;
	width: 100%;
	border-collapse: collapse;
	white-space: nowrap;
}

.c-id { width: 41px; }
.c-name { width: 198px; }
.c-num { width: 36px; }
.c-stat { width: 65px; }
.c-off { width: 54px; }

.smart th {
	height: 18px;
	padding: 1px 0 0 3px;
	border-right: 1px solid #e0e4e8;
	border-bottom: 1px solid #d5d5d5;
	background: linear-gradient(#fff, #f4f5f7);
	font-weight: normal;
	text-align: left;
	line-height: 16px;
}

.smart th:last-child {
	padding-left: 6px;
}

.smart td {
	height: 18px;
	padding: 0 0 0 1px;
	line-height: 16px;
}

.smart td:last-child {
	padding: 0;
}

.smart tr.critical td {
	background: #f2f2f2;
}

.smart .id {
	display: flex;
	align-items: center;
	padding-left: 1px;
	gap: 1px;
}

.smart .id::before {
	content: "";
	width: 16px;
}

.smart .critical .id::before {
	display: none;
}

.smart .data {
	padding-right: 5px;
	text-align: right;
	font-weight: 700;
}

.offset {
	display: flex;
	align-items: center;
	height: 17px;
}

.offset button,
.offset b {
	display: flex;
	align-items: center;
	justify-content: center;
	flex: none;
	width: 16px;
	height: 17px;
	border: 1px solid #bbb;
	background: #fff;
}

.offset b {
	width: 22px;
	border-width: 1px 0;
	background: none;
}

/* HD Tune */
.hdtune {
	grid-column: 2 / 5;
	margin-top: -22px;
	padding: 0 7px 7px;
	border: 1px solid #111;
	border-radius: 7px;
	background: linear-gradient(100deg, rgba(255, 255, 255, 0.4), rgba(255, 255, 255, 0) 20%, rgba(255, 255, 255, 0.3) 40%, rgba(60, 90, 20, 0.25) 75%, rgba(255, 255, 255, 0.3)), linear-gradient(#a8d46c, #b6de80 28%, #5f8f2f 30%, #9bcf52 70%, #a9d66c);
	box-shadow: inset 0 0 0 1px #d8f0b8;
	font-family: "Liberation Sans", Arial, sans-serif;
}

.hd-title {
	display: flex;
	align-items: center;
	gap: 5px;
	height: 27px;
	font-family: "Open Sans", "Noto Sans", sans-serif;
	font-size: 12px;
}

.hd-title .caption {
	border-color: #445;
}

.hd-client {
	border: 1px solid #5d7a3a;
	background: #f0f0f0;
	padding-bottom: 3px;
}

.menu {
	display: flex;
	gap: 18px;
	height: 20px;
	padding: 1px 6px;
	background: #dae3ec;
	font-family: "Open Sans", "Noto Sans", sans-serif;
	line-height: 19px;
}

.menu a {
	color: #000;
	text-decoration: none;
}

.toolbar {
	display: flex;
	align-items: center;
	gap: 3px;
	height: 46px;
	padding: 0 11px 6px 10px;
	border-bottom: 1px solid #000;
	background: linear-gradient(#f2f2f2, #cfcfcf);
}

.toolbar select {
	width: 224px;
	height: 21px;
	margin-right: 8px;
	padding: 0 2px;
	border: 1px solid #707070;
	border-radius: 3px;
	appearance: none;
	background: linear-gradient(to bottom left, #000 50%, transparent 50%) right 8px center / 4px 4px no-repeat, linear-gradient(to bottom right, #000 50%, transparent 50%) right 4px center / 4px 4px no-repeat, linear-gradient(#f4f4f4, #d8d8d8);
	font: 11px "Liberation Sans", Arial, sans-serif;
	color: #000;
}

.tool {
	display: flex;
	align-items: center;
	justify-content: center;
	flex: none;
	width: 27px;
	height: 26px;
	border: 1px solid #777;
	border-radius: 3px;
	background: linear-gradient(#f4f4f4, #d8d8d8);
	box-shadow: inset 0 0 0 1px #fafafa;
}

.tool.hot {
	border-color: #3aa8d8;
	box-shadow: inset 0 0 0 1px #7fd8f8;
}

.tool.down {
	margin-left: 5px;
}

.degrees {
	margin-right: auto;
	font: 600 13px "Open Sans", "Noto Sans", sans-serif;
}

.exit {
	width: 52px;
	height: 26px;
	margin-left: 10px;
}

.hd-tabs {
	display: flex;
	align-items: flex-end;
	height: 20px;
	margin: 0 14px 0 12px;
}

.toolbar + .hd-tabs {
	margin-top: 3px;
}

.hd-tab {
	display: flex;
	align-items: center;
	justify-content: center;
	gap: 9px;
	min-width: 0;
	height: 20px;
	border: 1px solid #8c8e9a;
	border-width: 1px 2px 0 0;
	background: linear-gradient(#f2f2f2, #ebebeb 48%, #dddddd 50%, #d0d0d0);
}

.hd-tab:first-child {
	border-left-width: 1px;
}

.hd-tab.active {
	position: relative;
	height: 23px;
	margin-bottom: -1px;
	padding-bottom: 2px;
	border-width: 1px 1px 0 0;
	background: #fff;
	gap: 7px;
}

.w106 { flex: 106; }
.w70 { flex: 70; }
.w83 { flex: 83; }
.w101 { flex: 101; }
.w114 { flex: 114; }
.w76 { flex: 76; }
.w128 { flex: 128; }
.w113 { flex: 113; }
.w75 { flex: 75; }
.w134 { flex: 134; }
.w100 { flex: 100; }

.hd-panel {
	margin: 0 11px 0 10px;
	padding-bottom: 12px;
	border: 1px solid #8c8e9a;
	background: #fff;
}

.chart-row {
	display: flex;
	justify-content: space-between;
}

#chart text {
	font-size: 10px;
}

#chart .major { stroke: #777; }
#chart .minor { stroke: #4a4a4a; }

.options {
	width: 101px;
	margin: 12px 2px 0 0;
}

.start {
	display: block;
	width: 74px;
	margin: 0 0 9px 9px;
}

.group {
	padding: 4px 0 2px 5px;
	border-top: 1px solid #a0a0a0;
}

.group label {
	display: flex;
	align-items: center;
	gap: 4px;
	height: 16px;
}

.stroke {
	padding: 6px 0 9px 4px;
}

.stroke > label {
	padding-left: 1px;
	gap: 3px;
}

.group.align {
	padding-top: 9px;
}

.align label {
	gap: 3px;
}

input[type="checkbox"],
input[type="radio"] {
	appearance: none;
	flex: none;
	position: relative;
	width: 13px;
	height: 13px;
	margin: 0;
	border: 1px solid #8e8f8f;
	background: linear-gradient(135deg, #cfd4da, #f6f6f6);
	box-shadow: inset 0 0 0 1px #f4f4f4;
}

input[type="radio"] {
	border-radius: 50%;
}

input[type="radio"]:checked {
	background: radial-gradient(#3cc0f0 0 1px, #0b4a75 3px, #f4f4f4 4px);
}

input[type="checkbox"]:checked::after {
	content: "";
	position: absolute;
	left: 3px;
	top: 0;
	width: 5px;
	height: 9px;
	border: solid #3f5a9c;
	border-width: 0 2px 2px 0;
	transform: rotate(38deg);
}

.spin {
	display: flex;
	align-items: center;
	margin-top: 5px;
	padding-left: 1px;
}

.spin input {
	width: 45px;
	height: 20px;
	margin: 0;
	padding: 0 2px;
	border: 1px solid #abadb3;
	border-right: 0;
	background: #fff;
	font: 11px "Liberation Sans", Arial, sans-serif;
	color: #6d6d6d;
}

.arrows {
	display: flex;
	flex-direction: column;
	width: 17px;
	height: 20px;
	margin-right: 11px;
	padding: 1px 1px 0 0;
	border: 1px solid #abadb3;
	border-left: 0;
}

.arrows i {
	height: 9px;
	border: 1px solid #c4c4c4;
	background: #eee;
	color: #888;
	font-size: 8px;
	line-height: 7px;
	text-align: center;
	font-style: normal;
}

.results {
	width: 537px;
	margin: 6px 0 0 7px;
	border-collapse: separate;
	border-spacing: 0;
	table-layout: fixed;
}

.r-key { width: 16px; }
.r-size { width: 92px; }
.r-ops { width: 109px; }
.r-avg { width: 116px; }
.r-max { width: 109px; }

.results td, .results th {
	height: 17px;
	padding: 0 16px 0 0;
	border-right: 2px solid #6a6a6a;
	font-size: 12px;
	font-weight: 700;
	line-height: 17px;
	text-align: right;
	white-space: nowrap;
}

.results th {
	height: 15px;
	padding: 0 5px 0 0;
	border-bottom: 2px solid #6a6a6a;
	line-height: 13px;
}

.results th.avg {
	padding-right: 11px;
}

.results th:last-child,
.results td:last-child {
	border-right: 0;
	padding-right: 10px;
}

.results .time {
	padding-right: 22px;
}

.results .key {
	padding: 0;
	border: 0;
	text-align: left;
}

.results td.size {
	padding: 0;
	font-size: 11px;
	font-weight: normal;
}

.results th.size {
	padding-right: 13px;
}

.results label {
	display: flex;
	align-items: center;
	gap: 3px;
}

.results i {
	display: block;
	width: 9px;
	height: 9px;
	border: 1px solid #000;
}

.yellow { background: #ff0; }
.results .red { background: #f00; }
.green { background: #0f0; }
.blue { background: #0080ff; }
.cyan { background: #0ff; }
```

FILE: script.js
```javascript
// id, name, value, worst, data, critical
var attributes = [
	[1, 'Raw Read Error Rate', 100, 100, '0', 1],
	[2, 'Throughput Performance', 132, 132, '96', 0],
	[3, 'Spin Up Time', 157, 157, '33817094', 1],
	[4, 'Start/Stop Count', 100, 100, '357', 0],
	[5, 'Reallocated Sectors Count', 100, 100, '0', 1],
	[7, 'Seek Error Rate', 100, 100, '0', 0],
	[8, 'Seek Time Performance', 128, 128, '18', 0],
	[9, 'Power On Time Count', 93, 93, '51535', 0],
	[10, 'Spin Retry Count', 100, 100, '0', 1],
	[12, 'Drive Power Cycle Count', 100, 100, '28', 0],
	[192, 'Power off Retract Cycle Count', 100, 100, '692', 0],
	[193, 'Load/Unload Cycle Count', 100, 100, '692', 0],
	[194, 'Disk Temperature', 253, 253, '53; 9; 21', 0],
	[196, 'Reallocation Event Count', 100, 100, '0', 1],
	[197, 'Current Pending Sector Count', 100, 100, '0', 1],
	[198, 'Off-Line Uncorrectable Sector Count', 100, 100, '0', 1],
	[199, 'Ultra ATA CRC Error Count', 200, 200, '0', 0]
];

var minus = '<button aria-label="-"><svg width="12" height="12"><path d="M0 6h12" stroke="#0d8050" stroke-width="3"/></svg></button>';
var plus = '<button aria-label="+"><svg width="12" height="12"><path d="M0 6h12M6 0v12" stroke="#0d8050" stroke-width="4"/></svg></button>';

document.getElementById('smart-rows').innerHTML = attributes.map(function(a) {
	var icon = a[5] ? '<svg width="16" height="16"><use href="#ok"/></svg>' : '';
	return '<tr class="' + (a[5] ? 'critical' : '') + '"><td><div class="id">' + icon + '<span>' + a[0] + '</span></div></td>' +
		'<td>' + a[1] + '</td><td>0</td><td>' + a[2] + '</td><td>' + a[3] + '</td>' +
		'<td>OK (Mindi...</td><td class="data">' + a[4] + '</td>' +
		'<td><div class="offset">' + minus + '<b>0</b>' + plus + '</div></td></tr>';
}).join('');

// access time chart
var X0 = 36, X1 = 425, Y0 = 231, Y1 = 15;

function px(gb) { return Math.round(X0 + (X1 - X0) * gb / 8001); }
function py(ms) { return Math.round(Y0 - (Y0 - Y1) * ms / 100); }

var seed = 7;
function rnd() {
	seed = (seed * 16807) % 2147483647;
	return seed / 2147483647;
}

var svg = '<defs><linearGradient id="sky" x2="0" y2="1"><stop offset="0"/><stop offset="1" stop-color="#404040"/></linearGradient></defs>' +
	'<rect x="35" y="13" width="391" height="219" fill="url(#sky)"/><g shape-rendering="crispEdges" fill="none">';
var labels = '<text x="36" y="12">ms</text>';

for (var i = 0; i <= 20; i++) {
	var x = px(i * 400) + 0.5, y = py(i * 5) + 0.5;
	var cls = i % 2 ? 'minor' : 'major';
	svg += '<path class="' + cls + '" d="M' + x + ' ' + Y1 + 'V' + (Y0 + 3) + 'M' + (X0 - 3) + ' ' + y + 'H' + X1 + '"/>';
	if (i % 2 == 0) {
		if (i) labels += '<text x="33" y="' + (y + 3) + '" text-anchor="end">' + (i * 5) + '.0</text>';
		labels += '<text x="' + (i == 20 ? X1 - 2 : x) + '" y="245" text-anchor="middle">' + (i == 20 ? '8001gB' : i * 400) + '</text>';
	}
}

// colour, number of samples, offset over the seek floor, spread in ms
var series = [
	['#0080ff', 1300, 6, 10],
	['#00ffff', 1300, 2, 13],
	['#ff0000', 850, 0, 8],
	['#ffff00', 950, 0, 8],
	['#00ff00', 1200, 0, 9]
];

series.forEach(function(s) {
	var d = '';
	for (var i = 0; i < s[1]; i++) {
		var t = Math.pow(rnd(), 1.4);
		// the far end of the disk is sampled less often
		if (t > 0.5 && rnd() < (t - 0.5) * 1.9) continue;
		var floor = 3 + 8 * Math.sqrt(t) + 4 * t * t * t;
		var ms = floor + s[2] + s[3] * rnd();
		if (rnd() < 0.1) ms += rnd() * 8;
		if (rnd() < 0.008) ms += rnd() * 32;
		d += 'M' + px(t * 7950) + ' ' + (py(ms) + 0.5) + 'h1';
	}
	svg += '<path stroke="' + s[0] + '" d="' + d + '"/>';
});

document.getElementById('chart').innerHTML = svg + '</g>' + labels;
```
